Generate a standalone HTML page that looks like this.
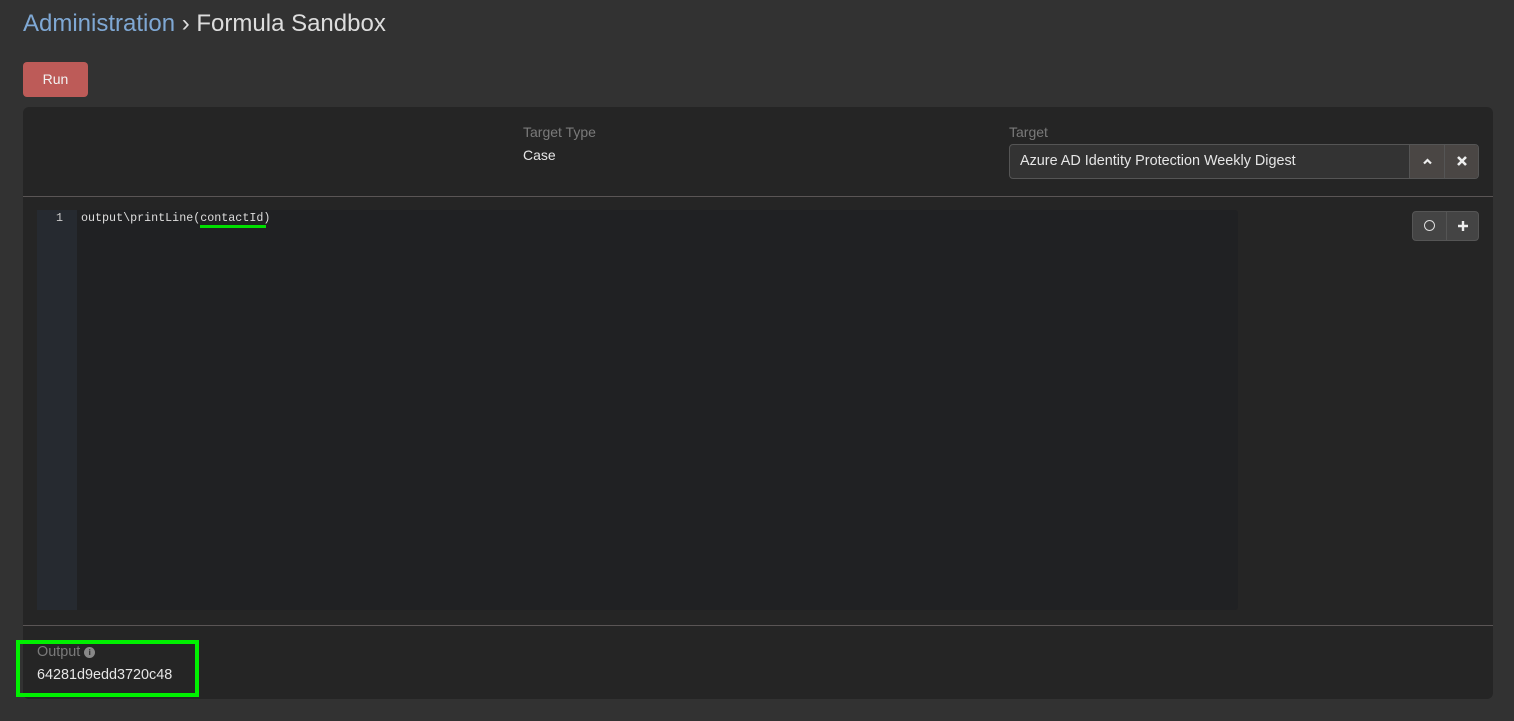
<!DOCTYPE html>
<html><head><style>
body{margin:0;width:1514px;height:721px;background:#323232;font-family:"Liberation Sans",sans-serif;position:relative;overflow:hidden}
.a{position:absolute}
</style></head><body>
<div class="a" style="left:23px;top:10px;font-size:24px;color:#ddd;white-space:nowrap"><span style="color:#7fa8d4">Administration</span> › Formula Sandbox</div>
<div class="a" style="left:23px;top:62px;width:65px;height:35px;background:#bd5b58;border-radius:4px;color:#f2f2f2;font-size:14px;line-height:35px;text-align:center">Run</div>
<div class="a" style="left:23px;top:107px;width:1470px;height:592px;background:#252525;border-radius:6px"></div>
<div class="a" style="left:523px;top:124px;font-size:14px;color:#7a7a7a">Target Type</div>
<div class="a" style="left:523px;top:147px;font-size:14px;color:#e6e6e6">Case</div>
<div class="a" style="left:1009px;top:124px;font-size:14px;color:#7a7a7a">Target</div>
<div class="a" style="left:1009px;top:144px;width:468px;height:33px;border:1px solid #555;border-radius:4px;background:#333;overflow:hidden">
 <div class="a" style="left:10px;top:8px;font-size:14.4px;color:#e6e6e6;white-space:nowrap">Azure AD Identity Protection Weekly Digest</div>
 <div class="a" style="left:399px;top:0;width:35px;height:33px;background:#4a4644;border-left:1px solid #555"><svg class="a" style="left:12px;top:11px" width="11" height="11" viewBox="0 0 11 11"><path d="M2 7.5 L5.5 4 L9 7.5" stroke="#eee" stroke-width="2.2" fill="none"/></svg></div>
 <div class="a" style="left:434px;top:0;width:34px;height:33px;background:#4a4644;border-left:1px solid #555"><svg class="a" style="left:11px;top:10px" width="12" height="12" viewBox="0 0 12 12"><path d="M2 2 L10 10 M10 2 L2 10" stroke="#eee" stroke-width="2.6"/></svg></div>
</div>
<div class="a" style="left:23px;top:196px;width:1470px;height:1px;background:#5a5555"></div>
<div class="a" style="left:37px;top:210px;width:1201px;height:400px;background:#202123;border-radius:3px"></div>
<div class="a" style="left:37px;top:210px;width:40px;height:400px;background:#262a30"></div>
<div class="a" style="left:56px;top:211px;font-family:'Liberation Mono',monospace;font-size:11.7px;color:#ccc">1</div>
<div class="a" style="left:81px;top:211px;font-family:'Liberation Mono',monospace;font-size:11.7px;color:#ddd;white-space:pre">output\printLine(contactId)</div>
<div class="a" style="left:200px;top:225px;width:66px;height:3px;background:#00e000"></div>
<div class="a" style="left:1412px;top:211px;width:65px;height:28px;border:1px solid #555;border-radius:4px;background:#444">
 <div class="a" style="left:11px;top:8px;width:9px;height:9px;border:1.5px solid #ddd;border-radius:50%"></div>
 <div class="a" style="left:33px;top:0;width:1px;height:28px;background:#555"></div>
 <svg class="a" style="left:44px;top:8px" width="12" height="12" viewBox="0 0 12 12"><path d="M6 1 V11 M1 6 H11" stroke="#eee" stroke-width="2.4"/></svg>
</div>
<div class="a" style="left:23px;top:625px;width:1470px;height:1px;background:#5a5555"></div>
<div class="a" style="left:16px;top:640px;width:175px;height:49px;border:4px solid #00f000"></div>
<div class="a" style="left:37px;top:644px;font-size:14.4px;color:#7a7a7a">Output <span style="display:inline-block;width:11px;height:11px;border-radius:50%;background:#888;color:#252525;font-size:8px;line-height:11px;text-align:center;font-weight:bold;vertical-align:1px">i</span></div>
<div class="a" style="left:37px;top:667px;font-size:14.4px;color:#e6e6e6">64281d9edd3720c48</div>
</body></html>
